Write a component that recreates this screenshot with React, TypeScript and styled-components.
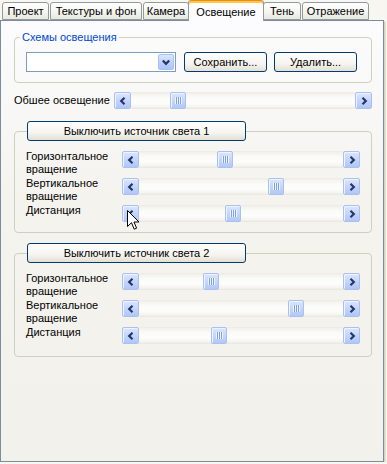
import React from 'react';
import styled, { createGlobalStyle } from 'styled-components';

const Global = createGlobalStyle`
  body {
    margin: 0;
    background: #f7f6f1;
    font-family: Tahoma, 'Liberation Sans', Arial, sans-serif;
    font-size: 11px;
    color: #000;
  }
`;

const Window = styled.div`
  position: relative;
  width: 384px;
  height: 462px;
  box-sizing: border-box;
`;

const TabStrip = styled.div`
  display: flex;
  align-items: flex-end;
  height: 20px;
  padding-left: 2px;
`;

const Tab = styled.div<{ $w: number; $active?: boolean }>`
  box-sizing: border-box;
  width: ${(p) => (p.$active ? p.$w + 4 : p.$w)}px;
  height: ${(p) => (p.$active ? 21 : 18)}px;
  margin: 0 ${(p) => (p.$active ? -2 : 0)}px ${(p) => (p.$active ? -1 : 0)}px
    ${(p) => (p.$active ? -1 : 1)}px;
  border: 1px solid #919b9c;
  border-bottom: ${(p) => (p.$active ? 'none' : '1px solid #919b9c')};
  border-top-color: ${(p) => (p.$active ? '#e68b2c' : '#919b9c')};
  border-radius: 3px 3px 0 0;
  background: ${(p) =>
    p.$active ? '#fcfcfe' : 'linear-gradient(#ffffff, #f3f3ef 60%, #e8e7e0)'};
  box-shadow: ${(p) => (p.$active ? 'inset 0 2px 0 #ffc73c' : 'none')};
  display: flex;
  align-items: center;
  justify-content: center;
  padding-top: ${(p) => (p.$active ? 1 : 0)}px;
  white-space: nowrap;
  position: relative;
  z-index: ${(p) => (p.$active ? 1 : 0)};
  &:first-child {
    margin-left: 0;
  }
`;

const Page = styled.div`
  box-sizing: border-box;
  height: 442px;
  border: 1px solid #7b8d9c;
  background: linear-gradient(#fcfcfe, #f4f3ee 40%, #f2f1eb);
  box-shadow: 1px 1px 0 #d9d3bf, 2px 2px 0 #e6e1cf;
  padding: 10px 0 0 13px;
`;

const GroupBox = styled.fieldset<{ $pb: number }>`
  box-sizing: border-box;
  width: 358px;
  margin: 0;
  padding: 0 0 ${(p) => p.$pb}px 0;
  border: 1px solid #d0d0bf;
  border-radius: 4px;
  min-inline-size: 0;
`;

const Caption = styled.legend`
  margin-left: 5px;
  padding: 0 2px;
  line-height: 13px;
  color: #0046d5;
`;

const ButtonLegend = styled.legend`
  margin-left: 12px;
  padding: 0;
`;

const SchemeRow = styled.div`
  display: flex;
  padding: 8px 0 0 11px;
  gap: 7px;
`;

const Combo = styled.div`
  box-sizing: border-box;
  width: 150px;
  height: 20px;
  margin-right: 1px;
  border: 1px solid #7f9db9;
  background: #fff;
  display: flex;
  justify-content: flex-end;
  padding: 1px;
`;

const DropBtn = styled.div`
  box-sizing: border-box;
  width: 16px;
  height: 16px;
  border: 1px solid #a9c0f3;
  border-radius: 2px;
  background: linear-gradient(#dbe6fe, #bdd0fb 55%, #aec4f7);
  display: flex;
  align-items: center;
  justify-content: center;
`;

const PushButton = styled.div<{ $w: number }>`
  box-sizing: border-box;
  width: ${(p) => p.$w}px;
  height: 20px;
  border: 1px solid #003c74;
  border-radius: 3px;
  background: linear-gradient(#ffffff, #f5f4ef 60%, #e3e0d3);
  display: flex;
  align-items: center;
  justify-content: center;
  white-space: nowrap;
`;

const MainRow = styled.div`
  display: flex;
  align-items: center;
  margin-top: 9px;
`;

const MainLabel = styled.div`
  width: 100px;
  line-height: 13px;
`;

const LightGroup = styled(GroupBox)`
  margin-top: ${(p) => (p.$pb > 10 ? 10 : 12)}px;
`;

const Rows = styled.div`
  display: flex;
  flex-direction: column;
  padding: 8px 0 0 11px;
`;

const Row = styled.div`
  display: flex;
  align-items: flex-start;
`;

const RowLabel = styled.div`
  width: 96px;
  line-height: 13px;
  padding-top: 1px;
  min-height: 25px;
  &:only-child,
  &.single {
    min-height: 0;
  }
`;

const ScrollBar = styled.div<{ $w: number; $mt: number }>`
  display: flex;
  width: ${(p) => p.$w}px;
  height: 17px;
  margin-top: ${(p) => p.$mt}px;
  flex: none;
`;

const ArrowBtn = styled.div`
  box-sizing: border-box;
  width: 17px;
  height: 17px;
  flex: none;
  border: 1px solid #a9c0f3;
  border-radius: 2px;
  background: linear-gradient(#dbe6fe, #c2d4fb 55%, #b0c6f8);
  box-shadow: inset 1px 1px 0 #eef3fe;
  display: flex;
  align-items: center;
  justify-content: center;
`;

const Track = styled.div`
  flex: 1;
  position: relative;
  background: linear-gradient(
    #ebeae3 0,
    #f4f3ee 2px,
    #fbfbf8 6px,
    #fdfdfb 11px,
    #f4f3ee 15px,
    #e6e5dd 17px
  );
`;

const Thumb = styled.div<{ $x: number }>`
  position: absolute;
  top: 0;
  left: ${(p) => p.$x}px;
  box-sizing: border-box;
  width: 16px;
  height: 17px;
  border: 1px solid #a9c0f3;
  border-radius: 2px;
  background: linear-gradient(#dbe6fe, #c4d5fb 55%, #b3c8f8);
  box-shadow: inset 1px 1px 0 #eef3fe;
  display: flex;
  align-items: center;
  justify-content: center;
  &::after {
    content: '';
    width: 7px;
    height: 7px;
    background: repeating-linear-gradient(
      to right,
      #eef4fe 0 1px,
      #7f9fe6 1px 2px
    );
  }
`;

const Cursor = styled.svg`
  position: absolute;
  left: 127px;
  top: 210px;
`;

const Chevron = ({ dir }: { dir: 'left' | 'right' | 'down' }) => {
  const d =
    dir === 'left'
      ? 'M5.5 0.8 L2.2 4 L5.5 7.2'
      : dir === 'right'
      ? 'M2.5 0.8 L5.8 4 L2.5 7.2'
      : 'M0.8 2.5 L4 5.8 L7.2 2.5';
  return (
    <svg width="8" height="8" viewBox="0 0 8 8">
      <path d={d} fill="none" stroke="#25386a" strokeWidth="2.2" />
    </svg>
  );
};

const Slider = ({ w, x, mt = 0 }: { w: number; x: number; mt?: number }) => (
  <ScrollBar $w={w} $mt={mt}>
    <ArrowBtn>
      <Chevron dir="left" />
    </ArrowBtn>
    <Track>
      <Thumb $x={x} />
    </Track>
    <ArrowBtn>
      <Chevron dir="right" />
    </ArrowBtn>
  </ScrollBar>
);

const tabs = [
  { title: 'Проект', w: 47 },
  { title: 'Текстуры и фон', w: 92 },
  { title: 'Камера', w: 46 },
  { title: 'Освещение', w: 72, active: true },
  { title: 'Тень', w: 38 },
  { title: 'Отражение', w: 67 },
];

const Light = ({ n, xs, pb }: { n: number; xs: number[]; pb: number }) => (
  <LightGroup $pb={pb}>
    <ButtonLegend>
      <PushButton $w={219}>Выключить источник света {n}</PushButton>
    </ButtonLegend>
    <Rows>
      <Row>
        <RowLabel>Горизонтальное вращение</RowLabel>
        <Slider w={238} x={xs[0]} mt={2} />
      </Row>
      <Row>
        <RowLabel>Вертикальное вращение</RowLabel>
        <Slider w={238} x={xs[1]} mt={2} />
      </Row>
      <Row>
        <RowLabel className="single">Дистанция</RowLabel>
        <Slider w={238} x={xs[2]} mt={2} />
      </Row>
    </Rows>
  </LightGroup>
);

export default function App() {
  return (
    <Window>
      <Global />
      <TabStrip>
        {tabs.map((t) => (
          <Tab key={t.title} $w={t.w} $active={t.active}>
            {t.title}
          </Tab>
        ))}
      </TabStrip>
      <Page>
        <GroupBox $pb={10}>
          <Caption>Схемы освещения</Caption>
          <SchemeRow>
            <Combo>
              <DropBtn>
                <Chevron dir="down" />
              </DropBtn>
            </Combo>
            <PushButton $w={83}>Сохранить...</PushButton>
            <PushButton $w={83}>Удалить...</PushButton>
          </SchemeRow>
        </GroupBox>
        <MainRow>
          <MainLabel>Обшее освещение</MainLabel>
          <Slider w={258} x={39} />
        </MainRow>
        <Light n={1} xs={[78, 129, 86]} pb={10} />
        <Light n={2} xs={[64, 149, 72]} pb={12} />
      </Page>
      <Cursor width="13" height="21" viewBox="0 0 13 21">
        <path
          d="M0.5 0.5 L0.5 16.5 L4.5 12.7 L7.2 19.2 L9.6 18.2 L7 12 L12 12 Z"
          fill="#fff"
          stroke="#000"
          strokeWidth="1"
          strokeLinejoin="miter"
        />
      </Cursor>
    </Window>
  );
}
